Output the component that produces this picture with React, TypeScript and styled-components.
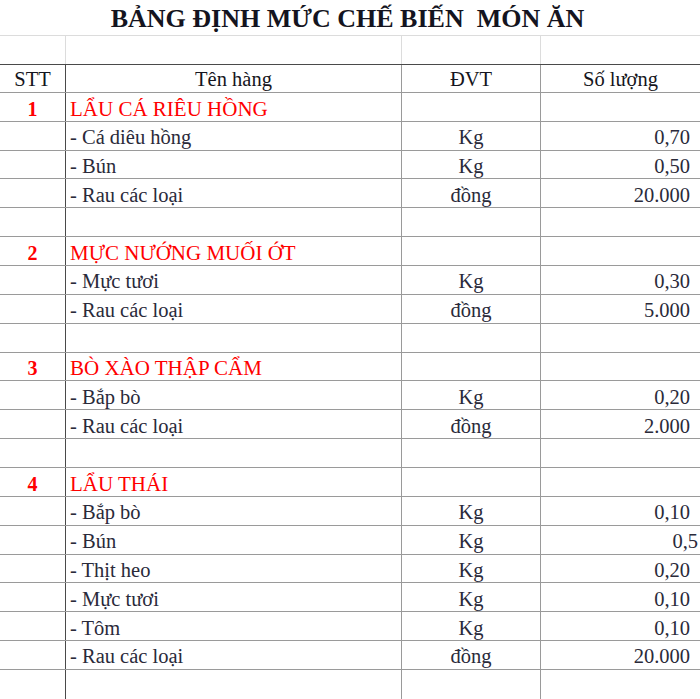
import React from "react";
import styled, { createGlobalStyle } from "styled-components";

const Global = createGlobalStyle`
  html, body { margin: 0; padding: 0; background: #fff; overflow: hidden; }
  body { font-family: "Liberation Serif", "Times New Roman", serif; }
`;

const COLS = "66px 336px 139px 1fr";
const ROW_H = 28.86;

const Sheet = styled.div`
  width: 700px;
  height: 699px;
  overflow: hidden;
  display: flex;
  flex-direction: column;
`;

const TitleRow = styled.div`
  height: 36px;
  box-sizing: border-box;
  border-bottom: 1px solid #dcdcdc;
  display: flex;
  align-items: flex-end;
  justify-content: center;
  padding-bottom: 3px;
`;

const Title = styled.h1`
  margin: 0;
  font-family: "Liberation Serif", "Times New Roman", serif;
  font-weight: bold;
  font-size: 26px;
  line-height: 1;
  color: #141420;
  white-space: pre;
  padding-right: 5px;
`;

type Tone = "light" | "dark" | "mid" | "none";

const lineColor = (t: Tone) =>
  t === "light" ? "#dcdcdc" : t === "dark" ? "#4a4a4a" : t === "mid" ? "#9a9a9a" : "transparent";

const Row = styled.div<{ $bottom: Tone; $h?: number }>`
  display: grid;
  grid-template-columns: ${COLS};
  height: ${(p) => p.$h ?? ROW_H}px;
  flex: 0 0 auto;
  box-sizing: border-box;
  border-bottom: ${(p) => (p.$bottom === "none" ? "0" : "1.5px")} solid ${(p) => lineColor(p.$bottom)};
`;

type Align = "left" | "center" | "right";

const Cell = styled.div<{ $align?: Align; $right?: Tone; $pr?: number }>`
  box-sizing: border-box;
  display: flex;
  align-items: flex-end;
  padding: 0 ${(p) => p.$pr ?? 4}px 0 4px;
  justify-content: ${(p) =>
    p.$align === "center" ? "center" : p.$align === "right" ? "flex-end" : "flex-start"};
  border-right: ${(p) => (p.$right && p.$right !== "none" ? `1.5px solid ${lineColor(p.$right)}` : "0")};
  overflow: visible;
  white-space: nowrap;
`;

const Head = styled.span`
  font-size: 20.5px;
  color: #151520;
  line-height: 1.15;
`;

const Num = styled.span`
  font-size: 20px;
  font-weight: bold;
  color: #ff0000;
  line-height: 1.15;
`;

const DishName = styled.span`
  font-size: 21px;
  color: #ff0000;
  line-height: 1.15;
`;

const Item = styled.span`
  font-size: 20.5px;
  color: #2a2a3a;
  line-height: 1.15;
`;

const VCol1: Tone = "dark";
const VCol: Tone = "mid";

type Ingredient = { name: string; unit: string; qty: string; pr?: number };
type Dish = { no: string; name: string; items: Ingredient[] };

const dishes: Dish[] = [
  {
    no: "1",
    name: "LẨU CÁ RIÊU HỒNG",
    items: [
      { name: "- Cá diêu hồng", unit: "Kg", qty: "0,70" },
      { name: "- Bún", unit: "Kg", qty: "0,50" },
      { name: "- Rau các loại", unit: "đồng", qty: "20.000" },
    ],
  },
  {
    no: "2",
    name: "MỰC NƯỚNG MUỐI ỚT",
    items: [
      { name: "- Mực tươi", unit: "Kg", qty: "0,30" },
      { name: "- Rau các loại", unit: "đồng", qty: "5.000" },
    ],
  },
  {
    no: "3",
    name: "BÒ XÀO THẬP CẨM",
    items: [
      { name: "- Bắp bò", unit: "Kg", qty: "0,20" },
      { name: "- Rau các loại", unit: "đồng", qty: "2.000" },
    ],
  },
  {
    no: "4",
    name: "LẨU THÁI",
    items: [
      { name: "- Bắp bò", unit: "Kg", qty: "0,10" },
      { name: "- Bún", unit: "Kg", qty: "0,5", pr: 2 },
      { name: "- Thịt heo", unit: "Kg", qty: "0,20" },
      { name: "- Mực tươi", unit: "Kg", qty: "0,10" },
      { name: "- Tôm", unit: "Kg", qty: "0,10" },
      { name: "- Rau các loại", unit: "đồng", qty: "20.000" },
    ],
  },
];

const EmptyRow: React.FC<{ bottom: Tone }> = ({ bottom }) => (
  <Row $bottom={bottom}>
    <Cell $right={VCol1} />
    <Cell $right={VCol} />
    <Cell $right={VCol} />
    <Cell />
  </Row>
);

export default function App() {
  return (
    <>
      <Global />
      <Sheet>
        <TitleRow>
          <Title>{"BẢNG ĐỊNH MỨC CHẾ BIẾN  MÓN ĂN"}</Title>
        </TitleRow>
        <Row $bottom="dark" $h={28.5}>
          <Cell $right="light" />
          <Cell $right="light" />
          <Cell $right="light" />
          <Cell />
        </Row>
        <Row $bottom="mid" $h={28.3}>
          <Cell $align="center" $right={VCol1}>
            <Head>STT</Head>
          </Cell>
          <Cell $align="center" $right={VCol}>
            <Head>Tên hàng</Head>
          </Cell>
          <Cell $align="center" $right={VCol}>
            <Head>ĐVT</Head>
          </Cell>
          <Cell $align="center">
            <Head>Số lượng</Head>
          </Cell>
        </Row>
        {dishes.map((d, di) => (
          <React.Fragment key={d.no}>
            <Row $bottom="mid">
              <Cell $align="center" $right={VCol1}>
                <Num>{d.no}</Num>
              </Cell>
              <Cell $right={VCol}>
                <DishName>{d.name}</DishName>
              </Cell>
              <Cell $right={VCol} />
              <Cell />
            </Row>
            {d.items.map((it, ii) => (
              <Row key={ii} $bottom="mid">
                <Cell $right={VCol1} />
                <Cell $right={VCol}>
                  <Item>{it.name}</Item>
                </Cell>
                <Cell $align="center" $right={VCol}>
                  <Item>{it.unit}</Item>
                </Cell>
                <Cell $align="right" $pr={it.pr ?? 10}>
                  <Item>{it.qty}</Item>
                </Cell>
              </Row>
            ))}
            <EmptyRow bottom={di === dishes.length - 1 ? "none" : "mid"} />
          </React.Fragment>
        ))}
      </Sheet>
    </>
  );
}
